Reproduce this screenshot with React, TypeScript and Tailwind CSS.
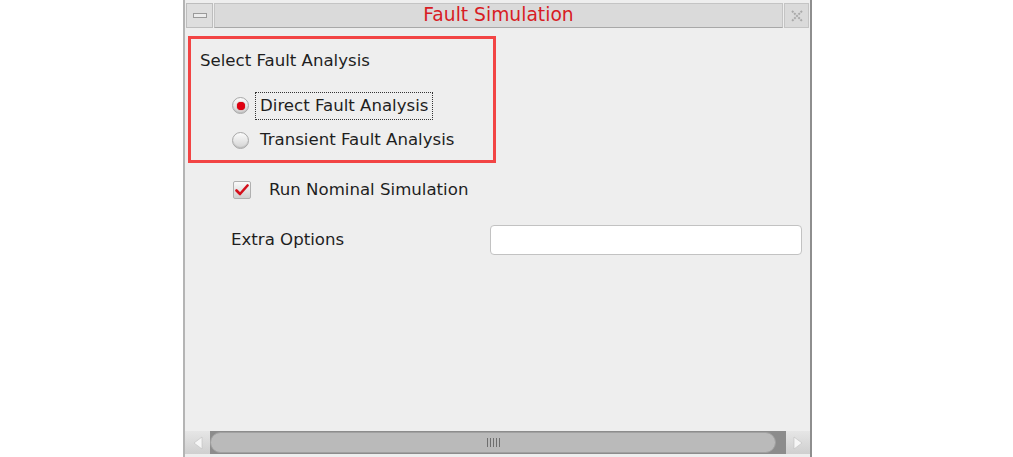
import React, { useState } from 'react';

const FONT = { fontFamily: '"DejaVu Sans", "Liberation Sans", sans-serif' };

const Radio: React.FC<{ checked: boolean }> = ({ checked }) => (
  <span className="flex h-[17px] w-[17px] shrink-0 items-center justify-center rounded-full border border-[#a8a8a8] bg-gradient-to-b from-[#fbfbfb] to-[#d4d4d4] shadow-[inset_0_-1px_1px_rgba(0,0,0,0.12)]">
    {checked && <span className="h-[8px] w-[8px] rounded-full bg-[#e00010] shadow-[0_0_1px_#900]" />}
  </span>
);

const Checkbox: React.FC<{ checked: boolean }> = ({ checked }) => (
  <span className="flex h-[18px] w-[18px] shrink-0 items-center justify-center rounded-[2px] border border-[#b0b0b0] bg-gradient-to-b from-[#fafafa] to-[#d0d0d0]">
    {checked && (
      <svg width="14" height="12" viewBox="0 0 14 12">
        <path d="M1.5 6.5 L5 10 L12.5 1.5" fill="none" stroke="#d4101c" strokeWidth="2.6" strokeLinecap="round" strokeLinejoin="round" />
      </svg>
    )}
  </span>
);

const TitleBar: React.FC = () => (
  <div className="mt-[3px] flex h-[25px] items-stretch gap-[1px]">
    {/* minimize */}
    <div className="ml-[1px] flex w-[27px] items-center justify-center border border-[#bdbdbd] bg-[#dedede]">
      <span className="h-[5px] w-[14px] border border-[#9a9a9a] bg-[#ececec]" />
    </div>
    <div className="flex flex-1 items-center justify-center border border-[#c4c4c4] border-b-[#a8a8a8] bg-[#dadada]">
      <span className="text-[18.7px] leading-none text-[#d81c24]" style={FONT}>
        Fault Simulation
      </span>
    </div>
    {/* close */}
    <div className="mr-[1px] flex w-[25px] items-center justify-center border border-[#c4c4c4] bg-[#dadada]">
      <svg width="14" height="14" viewBox="0 0 14 14">
        <path d="M2 2 L12 12 M12 2 L2 12" stroke="#a9a9a9" strokeWidth="2" strokeDasharray="2 1" />
      </svg>
    </div>
  </div>
);

const Scrollbar: React.FC = () => (
  <div className="mb-[3px] flex h-[23px] items-stretch bg-[#8c8c8c]">
    <div className="flex w-[25px] items-center justify-center bg-gradient-to-b from-[#e6e6e6] to-[#cfcfcf]">
      <svg width="10" height="14" viewBox="0 0 10 14">
        <path d="M9 1 L1 7 L9 13 Z" fill="#f6f6f6" stroke="#c0c0c0" strokeWidth="0.6" />
      </svg>
    </div>
    <div className="flex flex-1 items-center pr-[10px]">
      <div className="flex h-[21px] w-full items-center justify-center rounded-full border border-[#a0a0a0] bg-[#bababa]">
        <div className="flex gap-[2px]">
          {[0, 1, 2, 3, 4].map((i) => (
            <span key={i} className="h-[9px] w-[1px] bg-[#6e6e6e]" />
          ))}
        </div>
      </div>
    </div>
    <div className="flex w-[24px] items-center justify-center bg-gradient-to-b from-[#e6e6e6] to-[#cfcfcf]">
      <svg width="10" height="14" viewBox="0 0 10 14">
        <path d="M1 1 L9 7 L1 13 Z" fill="#f6f6f6" stroke="#c0c0c0" strokeWidth="0.6" />
      </svg>
    </div>
  </div>
);

export default function App() {
  const [mode, setMode] = useState<'direct' | 'transient'>('direct');
  const [nominal, setNominal] = useState(true);

  return (
    <div className="h-[457px] w-[1013px] overflow-hidden bg-white" style={FONT}>
      <div className="ml-[183px] flex h-[457px] w-[629px] flex-col border-l-2 border-r-2 border-l-[#b4b4b4] border-r-[#8e8e8e] bg-[#eeeeee] text-[16.6px] text-[#1e1e1e]">
        <TitleBar />

        <div className="flex-1">
          {/* fault analysis group */}
          <div className="ml-[3px] mt-[8px] h-[127px] w-[308px] border-[3px] border-[#f24444] pl-[9px] pt-[11px]">
            <div className="leading-[22px]">Select Fault Analysis</div>
            <div className="mt-[16px] pl-[32px]">
              <button
                onClick={() => setMode('direct')}
                className="flex h-[35px] items-center"
              >
                <Radio checked={mode === 'direct'} />
                <span
                  className={`ml-[6px] border border-dotted px-[4px] py-[2px] leading-[22px] ${
                    mode === 'direct' ? 'border-[#333]' : 'border-transparent'
                  }`}
                >
                  Direct Fault Analysis
                </span>
              </button>
              <button
                onClick={() => setMode('transient')}
                className="flex h-[34px] items-center"
              >
                <Radio checked={mode === 'transient'} />
                <span
                  className={`ml-[6px] border border-dotted px-[4px] py-[2px] leading-[22px] ${
                    mode === 'transient' ? 'border-[#333]' : 'border-transparent'
                  }`}
                >
                  Transient Fault Analysis
                </span>
              </button>
            </div>
          </div>

          {/* nominal */}
          <button
            onClick={() => setNominal(!nominal)}
            className="ml-[48px] mt-[13px] flex h-[28px] items-center"
          >
            <Checkbox checked={nominal} />
            <span className="ml-[18px] leading-[22px]">Run Nominal Simulation</span>
          </button>

          {/* extra options */}
          <div className="mt-[21px] flex h-[30px] items-center pl-[46px] pr-[8px]">
            <span className="w-[259px] leading-[22px]">Extra Options</span>
            <input
              type="text"
              className="h-[30px] flex-1 rounded-[4px] border border-[#c2c2c2] bg-white px-2 text-[14px] outline-none"
            />
          </div>
        </div>

        <Scrollbar />
      </div>
    </div>
  );
}
